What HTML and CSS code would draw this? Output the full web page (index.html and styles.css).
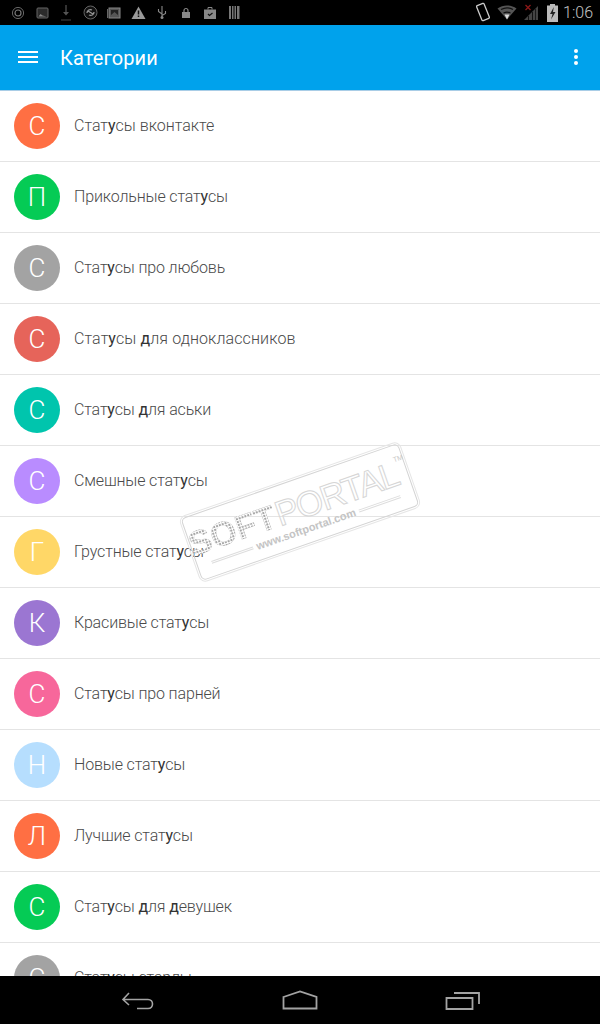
FILE: index.html
```html
<!DOCTYPE html>
<html lang="ru">
<head>
<meta charset="utf-8">
<title>Категории</title>
<link rel="stylesheet" href="styles.css">
</head>
<body>
<div class="screen">
  <div class="statusbar">
    <div class="status-left">
      <span class="slot"><svg width="14" height="14" viewBox="0 0 14 14"><circle cx="7" cy="7" r="5.600" fill="none" stroke="#666" stroke-width="1"/><circle cx="7" cy="7" r="3" fill="none" stroke="#777" stroke-width="1.200"/></svg></span>
      <span class="slot"><svg width="13" height="12" viewBox="0 0 13 12"><rect x="1" y="1" width="11" height="10" rx="1" fill="#2b2b2b" stroke="#666"/><path d="M2.500 9.500l2-2.500 2 1.500 4 1z" fill="#888"/></svg></span>
      <span class="slot"><svg width="12" height="18" viewBox="0 0 12 18"><path d="M6 1v8" stroke="#444" stroke-width="1.500"/><path d="M3 8l3 3.500L9 8z" fill="#555"/><path d="M1 16h10" stroke="#444"/></svg></span>
      <span class="slot"><svg width="15" height="15" viewBox="0 0 15 15"><circle cx="7.500" cy="7.500" r="6.500" fill="#111" stroke="#666"/><path d="M4 8c0-3 3-4 5-3M11 7c0 3-3 4-5 3M5 6l5 3" fill="none" stroke="#999" stroke-width="1.300"/></svg></span>
      <span class="slot"><svg width="14" height="12" viewBox="0 0 14 12"><rect x="2" y="1" width="11" height="10" fill="#555" stroke="#888"/><path d="M4 3h7v5L7.500 5 4 8z" fill="#222"/><path d="M0.500 2v9" stroke="#666"/></svg></span>
      <span class="slot"><svg width="15" height="13" viewBox="0 0 15 13"><path d="M7.500 0.500L14.500 13H.5z" fill="#999"/><path d="M7.500 4.500v4M7.500 9.500v1.500" stroke="#111" stroke-width="1.500"/></svg></span>
      <span class="slot"><svg width="10" height="15" viewBox="0 0 10 15"><path d="M5 1v12M5 9L1.500 6.500V4M5 10.500l3.500-2V6" fill="none" stroke="#888" stroke-width="1.100"/><circle cx="5" cy="12.500" r="1.500" fill="#888"/></svg></span>
      <span class="slot"><svg width="10" height="12" viewBox="0 0 10 12"><rect x="1" y="5" width="8" height="6" fill="#888"/><path d="M3 5V3.500a2 2 0 0 1 4 0V5" fill="none" stroke="#888" stroke-width="1.200"/></svg></span>
      <span class="slot"><svg width="14" height="14" viewBox="0 0 14 14"><path d="M1 3.500h12v9.500H1z" fill="#888"/><path d="M5 3.500V1.500h4v2" fill="none" stroke="#888"/><path d="M5 8l1.500 1.500L9.500 7" fill="none" stroke="#111" stroke-width="1.200"/></svg></span>
      <span class="slot"><svg width="11" height="13" viewBox="0 0 11 13"><path d="M0 0h2v13H0zM3 0h1.500v13H3zM5.500 0H7v13H5.500zM8 0h2.500v13H8z" fill="#777"/></svg></span>
    </div>
    <div class="status-right">
      <svg class="si" width="16" height="21" viewBox="0 0 16 21"><rect x="4" y="2" width="8" height="16" rx="1" transform="rotate(-22 8 10)" fill="none" stroke="#ccc" stroke-width="1.300"/></svg>
      <svg class="si" width="20" height="15" viewBox="0 0 20 15"><path d="M0.500 3.500C6 -0.500 14 -0.500 19.500 3.500L10 14.500z" fill="#555"/><path d="M4 4.500C7.500 2.500 12.500 2.500 16 4.500M6.500 8C8.500 7 11.500 7 13.500 8" fill="none" stroke="#111" stroke-width="1.200"/><path d="M7.500 9.500h5L10 14.500z" fill="#ddd"/></svg>
      <svg class="si" width="16" height="17" viewBox="0 0 16 17"><path d="M1 16L15 2v14z" fill="#444"/><path d="M5 16v-4h1v4zM9 16V8h1v8zM12 16V5h.8v11z" fill="#111"/><path d="M1.500 1l5 5M6.500 1l-5 5" stroke="#8c1818" stroke-width="1.300" transform="translate(1 0)"/></svg>
      <svg class="si battery" width="11" height="18" viewBox="0 0 11 18"><path d="M3 0h5v1.500h3V18H0V1.500h3z" fill="#bbb"/><path d="M6.800 3L3 10h2.500L4 15.500 8.500 8H6z" fill="#222"/></svg>
      <span class="clock">1:06</span>
    </div>
  </div>

  <header class="appbar">
    <div class="burger"><span></span><span></span><span></span></div>
    <h1 class="title">Категории</h1>
    <div class="kebab"><span></span><span></span><span></span></div>
  </header>

  <ul class="list">
    <li class="row"><span class="avatar orange">С</span><span class="label wide">Стат<b>у</b>сы вконтакте</span></li>
    <li class="row"><span class="avatar green">П</span><span class="label">Прикольные стат<b>у</b>сы</span></li>
    <li class="row"><span class="avatar grey">С</span><span class="label">Стат<b>у</b>сы про любовь</span></li>
    <li class="row"><span class="avatar red">С</span><span class="label wider">Стат<b>у</b>сы <b>д</b>ля одноклассников</span></li>
    <li class="row"><span class="avatar teal">С</span><span class="label">Стат<b>у</b>сы <b>д</b>ля аськи</span></li>
    <li class="row"><span class="avatar lilac">С</span><span class="label">Смешные стат<b>у</b>сы</span></li>
    <li class="row"><span class="avatar yellow">Г</span><span class="label">Грустные стат<b>у</b>сы</span></li>
    <li class="row"><span class="avatar purple">К</span><span class="label">Красивые стат<b>у</b>сы</span></li>
    <li class="row"><span class="avatar pink">С</span><span class="label">Стат<b>у</b>сы про парней</span></li>
    <li class="row"><span class="avatar sky">Н</span><span class="label">Новые стат<b>у</b>сы</span></li>
    <li class="row"><span class="avatar orange2">Л</span><span class="label">Лучшие стат<b>у</b>сы</span></li>
    <li class="row"><span class="avatar green">С</span><span class="label">Стат<b>у</b>сы <b>д</b>ля <b>д</b>евушек</span></li>
    <li class="row"><span class="avatar grey">С</span><span class="label">Стат<b>у</b>сы старлы</span></li>
  </ul>

  <div class="watermark">
    <div class="wm-main"><span class="wm-soft">SOFT</span><span class="wm-portal">PORTAL</span><sup class="wm-tm">TM</sup></div>
    <div class="wm-sub"><i></i><span>www.softportal.com</span><i></i></div>
  </div>

  <nav class="navbar">
    <svg width="34" height="20" viewBox="0 0 34 20"><path d="M8 3L2 9.500l6 5.500M2 9.500h25c6 0 6 9 0 9H16" fill="none" stroke="#a3a3a3" stroke-width="1.600"/></svg>
    <svg width="36" height="20" viewBox="0 0 36 20"><path d="M1.500 7L18 1.500 34.500 7v11.500H1.500z" fill="none" stroke="#a3a3a3" stroke-width="1.800"/></svg>
    <svg width="36" height="20" viewBox="0 0 36 20"><path d="M1.500 8h26v11h-26z" fill="none" stroke="#a3a3a3" stroke-width="1.800"/><path d="M9 3h25v11" fill="none" stroke="#a3a3a3" stroke-width="1.800"/></svg>
  </nav>
</div>
</body>
</html>
```
FILE: styles.css
```css
* { box-sizing: border-box; }
html, body { margin: 0; padding: 0; }
body { background: #fff; font-family: Roboto, "Noto Sans", sans-serif; }
.screen { position: relative; width: 600px; height: 1024px; overflow: hidden; display: flex; flex-direction: column; background: #fff; }

.statusbar { flex: 0 0 25px; background: #000; display: flex; justify-content: space-between; align-items: center; padding: 0 7px 0 6px; }
.status-left { display: flex; align-items: center; }
.slot { width: 24px; display: flex; justify-content: center; align-items: center; }
.status-right { display: flex; align-items: center; gap: 6px; }
.si { display: block; flex: none; }
.battery { margin-left: 2px; margin-right: -1px; }
.clock { color: #c4c4c4; font-size: 16px; font-weight: 300; }

.appbar { flex: 0 0 66px; background: #00a2ec; border-bottom: 1px solid #a9cde6; display: flex; align-items: center; padding: 0 22px 2px 18px; color: #fff; }
.burger { display: flex; flex-direction: column; gap: 3px; width: 20px; }
.burger span { display: block; height: 2px; background: #fff; }
.title { flex: 1; margin: 2px 0 0 22px; font-size: 20px; font-weight: 400; letter-spacing: .1px; }
.kebab { display: flex; flex-direction: column; gap: 2px; }
.kebab span { display: block; width: 4px; height: 4px; border-radius: 50%; background: #fff; }

.list { list-style: none; margin: 0; padding: 0; flex: 1; min-height: 0; overflow: hidden; }
.row { height: 71px; display: flex; align-items: center; padding: 0 0 1px 14px; border-bottom: 1px solid #e4e4e4; }
.avatar { width: 46px; height: 46px; border-radius: 50%; flex: none; display: flex; align-items: center; justify-content: center; color: #fff; font-size: 26px; font-weight: 300; }
.label { margin-left: 14px; font-size: 16px; font-weight: 300; color: #4a4a4a; letter-spacing: -.15px; }
.label.wide { letter-spacing: 0; }
.label.wider { letter-spacing: .1px; }
.label b { font-weight: 400; color: #333; }
.orange { background: #ff6f43; }
.green { background: #05cb55; }
.grey { background: #a3a3a3; }
.red { background: #e6645a; }
.teal { background: #00c5ad; }
.lilac { background: #b98cff; }
.yellow { background: #ffd767; }
.purple { background: #9b76d2; }
.pink { background: #f7679b; }
.sky { background: #b6defe; }
.orange2 { background: #ff6f43; }

.watermark { position: absolute; left: 185px; top: 479px; width: 230px; height: 66px; transform: rotate(-19.2deg); border: 1px solid #d4d4d4; outline: 1px solid #e6e6e6; outline-offset: 1px; border-radius: 5px; display: flex; flex-direction: column; align-items: center; justify-content: center; padding-top: 2px; color: transparent; }
.wm-main { display: flex; align-items: flex-start; line-height: 34px; height: 34px; font-family: "Liberation Sans", sans-serif; font-size: 35px; }
.wm-soft { font-weight: 700; letter-spacing: 0; background: repeating-linear-gradient(0deg, #fff 0 1px, transparent 1px 3px), repeating-linear-gradient(90deg, #fff 0 1px, transparent 1px 3px), #a8a8a8; -webkit-background-clip: text; background-clip: text; font-size: 34px; }
.wm-portal { letter-spacing: -1.500px; -webkit-text-stroke: 1px #d6d6d6; margin-left: 1px; }
.wm-tm { font-size: 7px; line-height: 8px; color: #c8c8c8; margin-left: 1px; }
.wm-sub { display: flex; align-items: center; gap: 4px; width: 200px; font-family: "Liberation Sans", sans-serif; font-size: 11px; font-weight: 700; color: #c4c4c4; }
.wm-sub i { flex: 1; height: 3px; border: 1px solid #ddd; border-width: 1px 0; }

.navbar { position: absolute; left: 0; right: 0; bottom: 0; height: 48px; background: #000; display: flex; align-items: center; justify-content: space-between; padding: 0 119px 0 121px; }
```
